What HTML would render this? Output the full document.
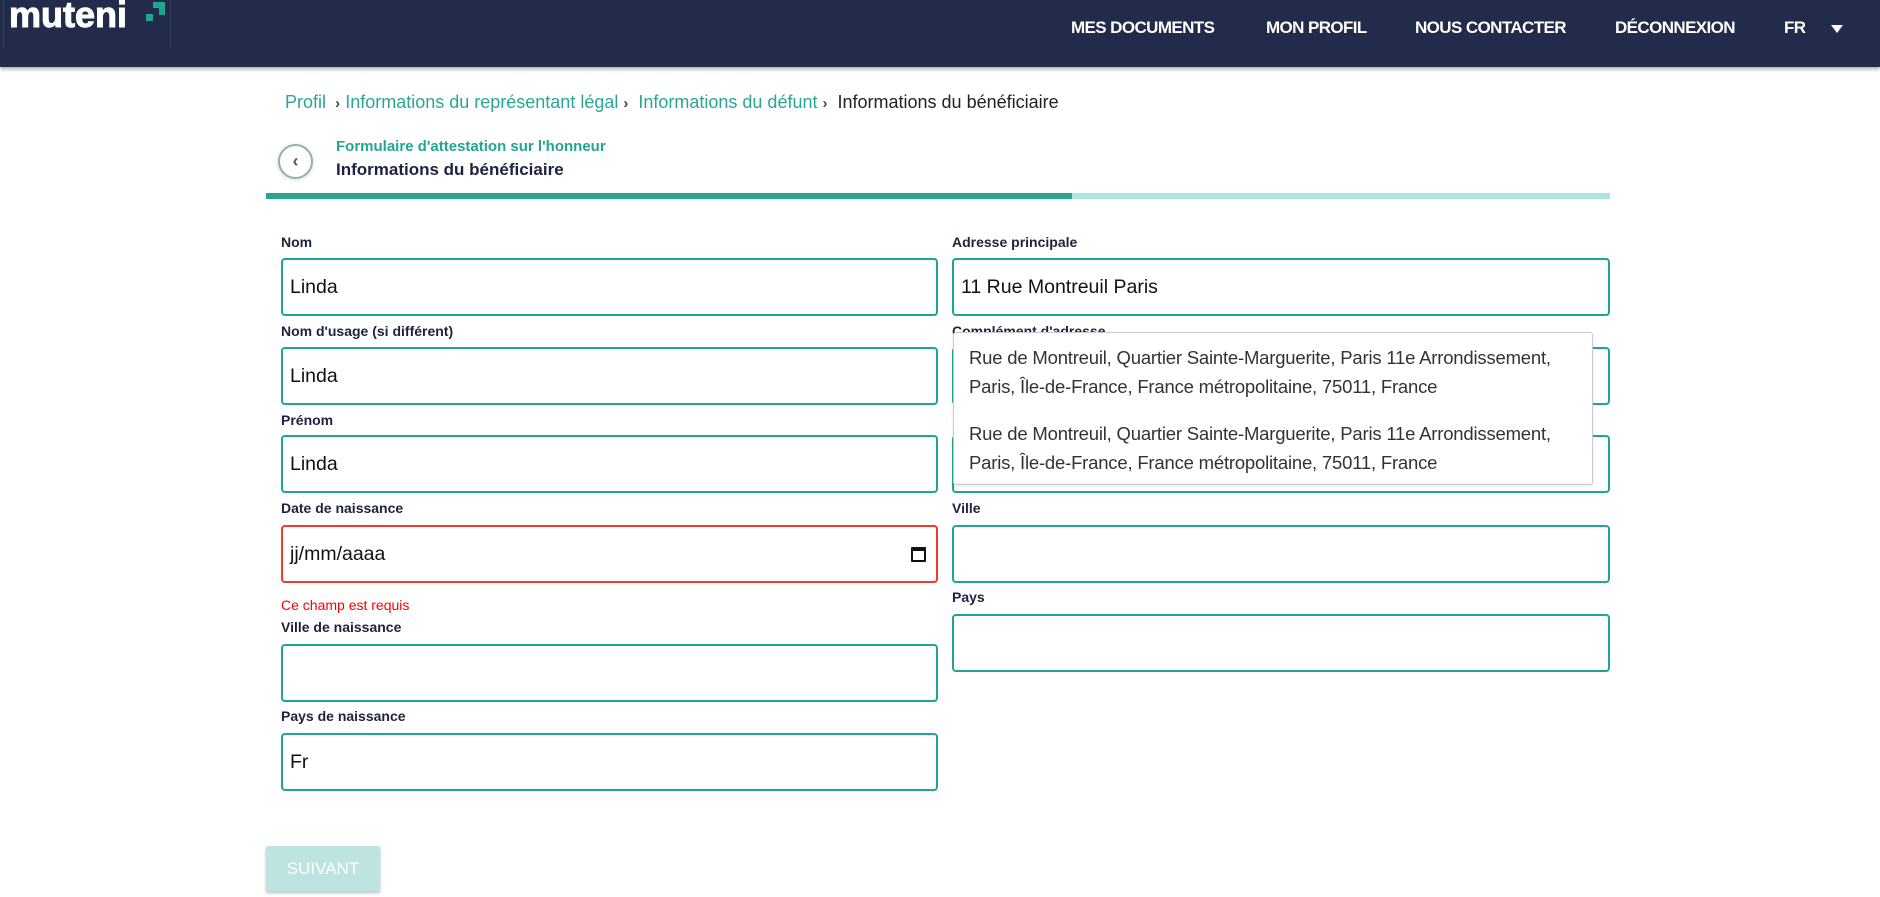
<!DOCTYPE html>
<html><head><meta charset="utf-8"><style>
*{box-sizing:border-box;margin:0;padding:0}
body{width:1880px;height:897px;background:#fff;font-family:"Liberation Sans",sans-serif;position:relative;overflow:hidden;color:#1d2240}
.hdr{position:absolute;left:0;top:0;width:1880px;height:67px;background:#232b4a;box-shadow:0 2px 4px rgba(0,0,0,.35)}
.nav{position:absolute;top:18px;color:#fff;font-size:17px;font-weight:bold;letter-spacing:-0.6px}
.a{position:absolute;}
.lbl{position:absolute;font-size:14px;font-weight:bold;color:#1d2240}
.in{position:absolute;height:58px;border:2px solid #1ea593;border-radius:4px;font-size:19.5px;color:#111;padding-left:7px;line-height:54px;background:#fff}
.L{left:281px;width:657px}.R{left:952px;width:658px}
.bc{position:absolute;top:92px;font-size:18px;color:#2aa596}
.sep{color:#444;font-size:15px;font-weight:bold}
.dd{position:absolute;left:953px;top:332px;width:640px;height:153px;background:#fff;border:1px solid #ccc;border-radius:3px;box-shadow:0 1px 3px rgba(0,0,0,.1);font-size:18.5px;color:#333;padding:10px 0 0 15px;line-height:29px;letter-spacing:-0.2px;white-space:nowrap}
</style></head><body>
<div class="hdr">
 <div class="a" style="left:3px;top:0;width:1px;height:48px;background:#39415e"></div>
 <div class="a" style="left:170px;top:0;width:1px;height:48px;background:#39415e"></div>
 <div class="a" style="left:9px;top:-6px;color:#fff;font-size:36px;font-weight:bold;letter-spacing:0px;-webkit-text-stroke:1px #fff">muteni</div>
 <div class="a" style="left:146px;top:14px;width:7px;height:7px;background:#1ea593"></div>
 <div class="a" style="left:153px;top:2px;width:12px;height:13px;border-top:6px solid #1ea593;border-right:6px solid #1ea593"></div>
 <div class="nav" style="left:1071px">MES DOCUMENTS</div>
 <div class="nav" style="left:1266px">MON PROFIL</div>
 <div class="nav" style="left:1415px">NOUS CONTACTER</div>
 <div class="nav" style="left:1615px">DÉCONNEXION</div>
 <div class="nav" style="left:1784px">FR</div>
 <div class="a" style="left:1831px;top:25px;width:0;height:0;border-left:6px solid transparent;border-right:6px solid transparent;border-top:8px solid #fff"></div>
</div>
<div class="bc" style="left:285px">Profil <span class="sep">&nbsp;›</span> Informations du représentant légal <span class="sep">›</span>&nbsp; Informations du défunt <span class="sep">›</span>&nbsp; <span style="color:#222">Informations du bénéficiaire</span></div>
<div class="a" style="left:278px;top:144px;width:35px;height:35px;border:2px solid #8fb3ab;border-radius:50%;box-shadow:0 1px 4px rgba(0,0,0,.15);text-align:center;line-height:30px;color:#555;font-size:18px;font-weight:bold">‹</div>
<div class="a" style="left:336px;top:138px;font-size:15px;font-weight:bold;color:#22a593">Formulaire d'attestation sur l'honneur</div>
<div class="a" style="left:336px;top:160px;font-size:17px;font-weight:bold;color:#1d2240">Informations du bénéficiaire</div>
<div class="a" style="left:266px;top:193px;width:1344px;height:6px;background:#a8e6df"></div>
<div class="a" style="left:266px;top:193px;width:806px;height:6px;background:#2aa593"></div>

<div class="lbl" style="left:281px;top:234px">Nom</div>
<div class="in L" style="top:258px">Linda</div>
<div class="lbl" style="left:281px;top:323px">Nom d'usage (si différent)</div>
<div class="in L" style="top:347px">Linda</div>
<div class="lbl" style="left:281px;top:412px">Prénom</div>
<div class="in L" style="top:435px">Linda</div>
<div class="lbl" style="left:281px;top:500px">Date de naissance</div>
<div class="in L" style="top:525px;border-color:#ee3b30">jj/mm/aaaa<span style="position:absolute;right:10px;top:20px;width:15px;height:15px;border:2px solid #111;border-top-width:4px;border-radius:1px"></span></div>
<div class="a" style="left:281px;top:597px;font-size:14px;color:#f00">Ce champ est requis</div>
<div class="lbl" style="left:281px;top:619px">Ville de naissance</div>
<div class="in L" style="top:644px"></div>
<div class="lbl" style="left:281px;top:708px">Pays de naissance</div>
<div class="in L" style="top:733px">Fr</div>

<div class="lbl" style="left:952px;top:234px">Adresse principale</div>
<div class="in R" style="top:258px">11 Rue Montreuil Paris</div>
<div class="lbl" style="left:952px;top:323px">Complément d'adresse</div>
<div class="in R" style="top:347px"></div>
<div class="in R" style="top:435px"></div>
<div class="lbl" style="left:952px;top:500px">Ville</div>
<div class="in R" style="top:525px"></div>
<div class="lbl" style="left:952px;top:589px">Pays</div>
<div class="in R" style="top:614px"></div>
<div class="dd">Rue de Montreuil, Quartier Sainte-Marguerite, Paris 11e Arrondissement,<br>Paris, Île-de-France, France métropolitaine, 75011, France<div style="height:18px"></div>Rue de Montreuil, Quartier Sainte-Marguerite, Paris 11e Arrondissement,<br>Paris, Île-de-France, France métropolitaine, 75011, France</div>

<div class="a" style="left:266px;top:846px;width:114px;height:45px;background:#bde4e1;border-radius:2px;box-shadow:0 2px 3px rgba(0,0,0,.25);color:#fff;font-size:17px;text-align:center;line-height:45px">SUIVANT</div>
</body></html>
